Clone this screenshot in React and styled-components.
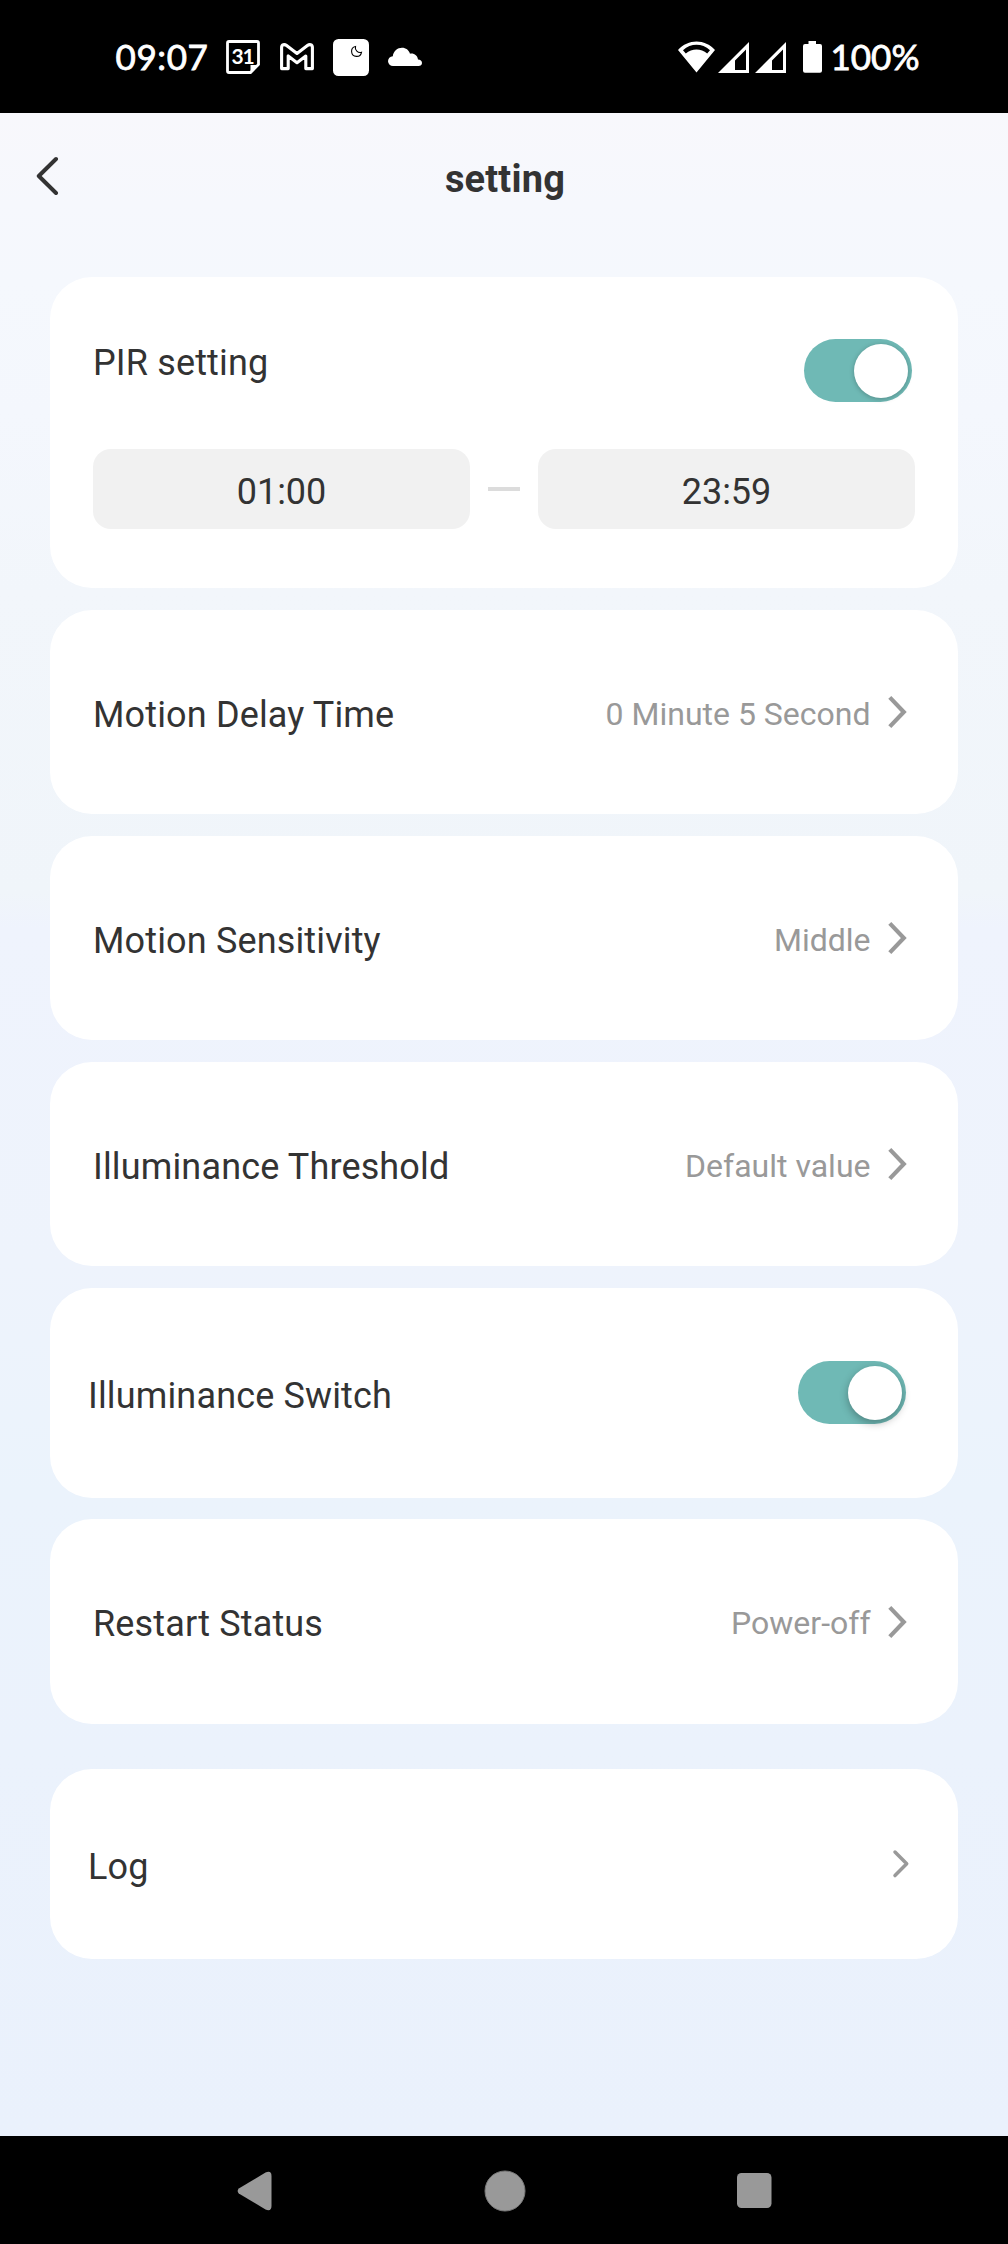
import React, { useState } from "react";
import styled, { createGlobalStyle } from "styled-components";

const GlobalStyle = createGlobalStyle`
  * { box-sizing: border-box; }
  body { margin: 0; background: #000; }
  button { border: 0; padding: 0; background: none; font: inherit; color: inherit; display: flex; }
`;

const Phone = styled.div`
  width: 1008px;
  height: 2244px;
  display: flex;
  flex-direction: column;
  font-family: Roboto, "Noto Sans", sans-serif;
  color: #333;
`;

const StatusBar = styled.header`
  height: 113px;
  flex: none;
  background: #000;
  color: #fff;
  display: flex;
  justify-content: space-between;
  padding: 0 87px 0 115px;
  font-family: Lato, "Open Sans", sans-serif;
  font-size: 35px;
`;

const StatusGroup = styled.div`
  display: flex;
  align-items: center;
  height: 114px;
`;

const StatusText = styled.span`
  width: ${(p) => p.$width}px;
  padding-left: ${(p) => p.$left || 0}px;
  margin-top: -3px;
  letter-spacing: ${(p) => p.$spacing || 0}px;
  -webkit-text-stroke: 0.8px #fff;
  white-space: nowrap;
  line-height: 42px;
`;

const Glyph = styled.svg`
  display: block;
  flex: none;
  margin-left: ${(p) => p.$left || 0}px;
`;

const Screen = styled.main`
  flex: 1;
  background: linear-gradient(#f8f8fc 0, #f6f8fd 90px, #f5f8fd 170px, #f4f7fd 300px, #f2f6fb 480px, #f0f5fa 780px, #eff3fd 815px, #eef3fc 1150px, #ebf3fc 1380px, #ebf2fc 1640px, #eaf1fc 2023px);
`;

const TitleBar = styled.div`
  height: 164px;
  padding: 42px 36px 0;
  display: grid;
  grid-template-columns: 60px 1fr 60px;
`;

const Title = styled.h1`
  margin: 0;
  padding: 1px 0 0 2px;
  text-align: center;
  font-size: 38px;
  line-height: 46px;
  font-weight: 700;
  letter-spacing: 0.2px;
`;

const List = styled.div`
  display: flex;
  flex-direction: column;
  padding: 0 50px;
`;

const Card = styled.section`
  height: ${(p) => p.$height || 204}px;
  margin-bottom: ${(p) => p.$gap || 22}px;
  padding: ${(p) => p.$pad || "0 50px 0 43px"};
  border-radius: 42px;
  background: #fff;
`;

const RowCard = styled(Card)`
  display: flex;
  align-items: center;
  justify-content: space-between;
`;

const PirHead = styled.div`
  display: flex;
  justify-content: space-between;
  height: 110px;
  padding-right: 3px;
`;

const Label = styled.span`
  padding-top: ${(p) => p.$top ?? 5}px;
  font-size: 36px;
  line-height: 42px;
  letter-spacing: 0.15px;
  white-space: nowrap;
`;

const Trailing = styled.div`
  display: flex;
  align-items: center;
`;

const Value = styled.span`
  padding: 3px 17.5px 0 0;
  font-size: 32px;
  line-height: 38px;
  color: #999;
  white-space: nowrap;
`;

const Track = styled.button`
  width: 108px;
  height: 63px;
  flex: none;
  padding: 5px 4px;
  border-radius: 32px;
  background: ${(p) => (p.$on ? "#6fb9b5" : "#ddd")};
  justify-content: ${(p) => (p.$on ? "flex-end" : "flex-start")};
  margin-bottom: ${(p) => (p.$raised ? 1 : 0)}px;
`;

const Knob = styled.span`
  width: 54px;
  height: 54px;
  border-radius: 50%;
  background: #fff;
  box-shadow: ${(p) => (p.$raised ? "0 3px 8px rgba(0,0,0,.3)" : "0 1px 5px rgba(0,0,0,.25)")};
`;

const TimeRange = styled.div`
  display: flex;
  align-items: center;
  justify-content: space-between;
`;

const TimeField = styled.button`
  width: 377px;
  height: 80px;
  padding-top: 5px;
  border-radius: 18px;
  background: #f1f1f1;
  align-items: center;
  justify-content: center;
  font-size: 36px;
  line-height: 42px;
`;

const Dash = styled.span`
  width: 32px;
  height: 4px;
  background: #dcdcdc;
`;

const NavBar = styled.nav`
  height: 108px;
  flex: none;
  background: #000;
  display: flex;
  align-items: center;
  padding: 1px 236px 0;
  justify-content: space-between;
`;

function Toggle({ raised, label }) {
  const [on, setOn] = useState(true);
  return (
    <Track $on={on} $raised={raised} role="switch" aria-checked={on} aria-label={label} onClick={() => setOn(!on)}>
      <Knob $raised={raised} />
    </Track>
  );
}

function Chevron() {
  return (
    <svg width="20" height="34" viewBox="0 0 20 34" fill="none" stroke="#999" strokeWidth="4.2">
      <path d="M1.8 2.4L15.8 17L1.8 31.6" />
    </svg>
  );
}

function SettingRow({ label, value }) {
  return (
    <>
      <Label>{label}</Label>
      <Trailing>
        <Value>{value}</Value>
        <Chevron />
      </Trailing>
    </>
  );
}

function Signal({ left }) {
  return (
    <Glyph $left={left} width="31" height="31" viewBox="0 0 31 31">
      <path fill="#fff" fillRule="evenodd" d="M31 0V31H0ZM28 7.5L17 18.5V28H28Z" />
    </Glyph>
  );
}

export default function App() {
  return (
    <Phone>
      <GlobalStyle />
      <StatusBar>
        <StatusGroup>
          <StatusText $width={111} $left={0.5} $spacing={0.6}>09:07</StatusText>
          <Glyph width="34" height="34" viewBox="0 0 34 34" fill="none" stroke="#fff" strokeWidth="2.8">
            <path d="M3 1.5H31Q32.5 1.5 32.5 3V24.5L24.5 32.5H3Q1.5 32.5 1.5 31V3Q1.5 1.5 3 1.5Z" />
            <path d="M24.5 32.5V25H32.5Z" fill="#fff" stroke="none" />
            <text x="16.6" y="24" textAnchor="middle" fill="#fff" stroke="none" fontSize="21" fontWeight="700" letterSpacing="-1">31</text>
          </Glyph>
          <Glyph $left={20} width="34" height="28" viewBox="0 0 34 28" fill="none" stroke="#fff" strokeWidth="3.1" strokeLinejoin="round">
            <path d="M1.6 4.5C1.6 1.4 4.4.9 6.6 2.6L17 10.5L27.4 2.6C29.6.9 32.4 1.4 32.4 4.5V25.6H25.8V13L17 19.7L8.2 13V25.6H1.6Z" />
          </Glyph>
          <Glyph $left={19} width="36" height="37" viewBox="0 0 36 37">
            <rect width="36" height="37" rx="5.5" fill="#fff" />
            <path d="M22.5 7.5A5 5 0 1 0 28.5 13.3A4.8 4.8 0 0 1 22.5 7.5Z" fill="none" stroke="#000" strokeWidth="1.1" />
          </Glyph>
          <Glyph $left={19} width="34" height="20" viewBox="0 0 34 20">
            <path fill="#fff" d="M5 19A5 5 0 0 1 0 14.3C0 11.5 2 9.5 4.8 9.2C5.5 4 9.5 .8 14 .8C18 .8 20.7 3 22 6.7C26.2 6 29.5 8.7 30 12.6C32.4 12.8 34 14 34 16C34 18 32.6 19 30.5 19Z" />
          </Glyph>
        </StatusGroup>
        <StatusGroup>
          <Glyph width="37" height="32" viewBox="0 0 37 32">
            <path fill="#fff" fillRule="evenodd" d="M18.5 31.5L0 9C10-2.5 27-2.5 37 9ZM5 9.2L7.8 12.5C14 7 23 7 29.2 12.5L32 9.2C24 2 13 2 5 9.2Z" />
          </Glyph>
          <Signal left={3} />
          <Signal left={6} />
          <Glyph $left={17} width="19" height="32" viewBox="0 0 19 32">
            <path fill="#fff" d="M5.5 0H13V3H17Q19 3 19 5V29.7Q19 31.7 17 31.7H2Q0 31.7 0 29.7V5Q0 3 2 3H5.5Z" />
          </Glyph>
          <StatusText $width={99} $left={8.5}>100%</StatusText>
        </StatusGroup>
      </StatusBar>

      <Screen>
        <TitleBar>
          <button aria-label="Back">
            <svg width="24" height="42" viewBox="0 0 24 42" fill="none" stroke="#333" strokeWidth="4" strokeLinecap="round" strokeLinejoin="round">
              <path d="M20 4L2.8 21L20 38" />
            </svg>
          </button>
          <Title>setting</Title>
        </TitleBar>

        <List>
          <Card $height={311} $pad="62px 43px 0">
            <PirHead>
              <Label $top={3}>PIR setting</Label>
              <Toggle label="PIR setting" />
            </PirHead>
            <TimeRange>
              <TimeField>01:00</TimeField>
              <Dash />
              <TimeField>23:59</TimeField>
            </TimeRange>
          </Card>
          <RowCard>
            <SettingRow label="Motion Delay Time" value="0 Minute 5 Second" />
          </RowCard>
          <RowCard>
            <SettingRow label="Motion Sensitivity" value="Middle" />
          </RowCard>
          <RowCard>
            <SettingRow label="Illuminance Threshold" value="Default value" />
          </RowCard>
          <RowCard $height={210} $gap={21} $pad="0 52px 0 38px">
            <Label>Illuminance Switch</Label>
            <Toggle raised label="Illuminance Switch" />
          </RowCard>
          <RowCard $height={205} $gap={45}>
            <SettingRow label="Restart Status" value="Power-off" />
          </RowCard>
          <RowCard $height={190} $pad="0 48px 0 38px">
            <Label>Log</Label>
            <svg width="18" height="30" viewBox="0 0 18 30" fill="none" stroke="#999" strokeWidth="3.5" strokeLinecap="round" strokeLinejoin="round">
              <path d="M3 3L14.7 14.8L3 26.6" />
            </svg>
          </RowCard>
        </List>
      </Screen>

      <NavBar>
        <svg width="36" height="40" viewBox="0 0 36 40">
          <path fill="#999" d="M2.8 17.5L29.5 1.5Q35.5 -.8 35.5 5V35Q35.5 40.8 29.5 38.5L2.8 22.5Q.5 20 2.8 17.5Z" />
        </svg>
        <svg width="42" height="42" viewBox="0 0 42 42">
          <circle cx="21" cy="21" r="20" fill="#999" stroke="#777" strokeWidth="1" />
        </svg>
        <svg width="35" height="35" viewBox="0 0 35 35">
          <rect width="34.5" height="35" rx="4.5" fill="#999" />
        </svg>
      </NavBar>
    </Phone>
  );
}
